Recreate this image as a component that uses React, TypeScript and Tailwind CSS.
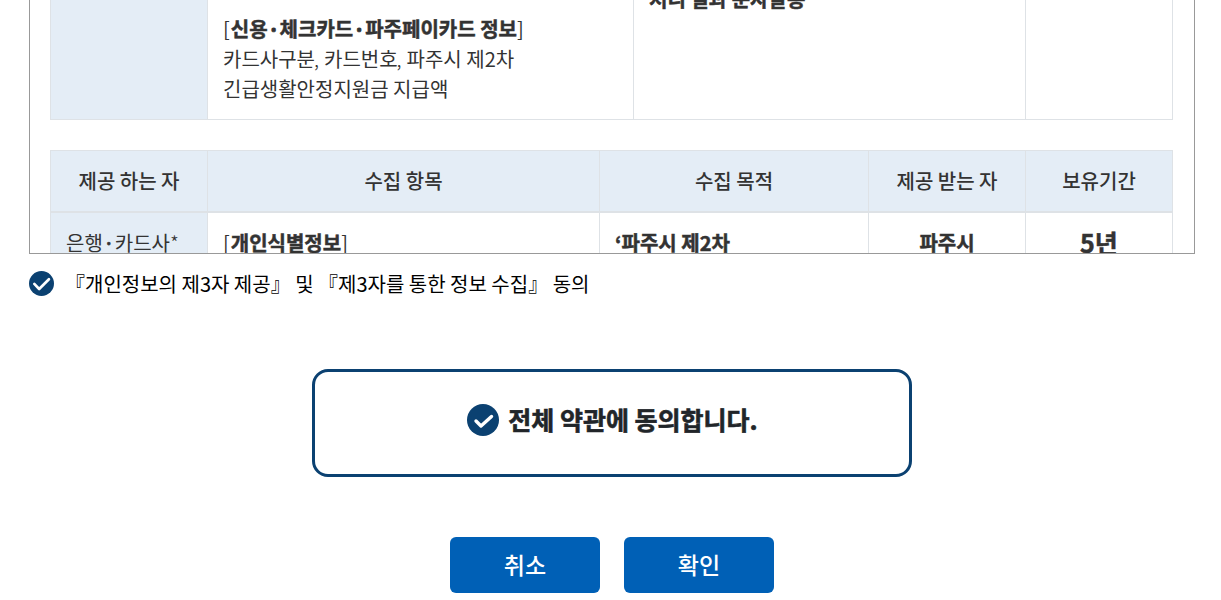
import type { ReactNode } from "react";

const CheckIcon = ({ className, path }: { className: string; path: string }) => (
  <svg className={className} viewBox="0 0 32 32" fill="none">
    <circle cx="16" cy="16" r="16" fill="#0b4171" />
    <path d={path} stroke="#fff" strokeWidth="3.4" strokeLinecap="round" strokeLinejoin="round" />
  </svg>
);

const Dot = () => <span className="inline-block w-3 text-center [-webkit-text-stroke:0.8px]">·</span>;

const Comma = () => <span className="mr-[0.5px] -ml-px font-light">,</span>;

const Bracket = ({ children }: { children: ReactNode }) => (
  <p>
    [<b className="ml-px [-webkit-text-stroke:0.5px]">{children}</b>]
  </p>
);

const headers = ["제공 하는 자", "수집 항목", "수집 목적", "제공 받는 자", "보유기간"];

const App = () => {
  return (
    <div className="h-[600px] overflow-hidden bg-white font-['Noto_Sans_CJK_KR',sans-serif] text-xl leading-[30px] text-[#333]">
      {/* TERMS BOX */}
      <div className="ml-[29px] h-[254px] w-[1166px] overflow-hidden border border-t-0 border-[#999] px-5">
        <div className="grid h-[120px] w-[1123px] grid-cols-[157px_426px_392px_147px] border-b border-l border-[#dee2e6]">
          <div className="border-r border-[#dee2e6] bg-[#e4edf6]" />
          <div className="border-r border-[#dee2e6] pt-3.5 pl-[15px]">
            <Bracket>
              신용<Dot />체크카드<Dot />파주페이카드 정보
            </Bracket>
            <p>카드사구분<Comma /> 카드번호<Comma /> 파주시 제2차</p>
            <p>긴급생활안정지원금 지급액</p>
          </div>
          <div className="border-r border-[#dee2e6] pl-[15px]">
            <p className="-mt-4 font-bold [-webkit-text-stroke:0.5px]">처리 결과 문자발송</p>
          </div>
          <div className="border-r border-[#dee2e6]" />
        </div>

        <div className="mt-[30px] w-[1123px] border-t border-l border-[#dee2e6]">
          <div className="grid h-[62px] grid-cols-[157px_392px_269px_157px_147px] border-b-2 border-[#dee2e6] bg-[#e4edf6] font-medium">
            {headers.map((header) => (
              <div key={header} className="flex items-center justify-center border-r border-[#dee2e6]">
                {header}
              </div>
            ))}
          </div>
          <div className="grid h-[120px] grid-cols-[157px_392px_269px_157px_147px]">
            <div className="border-r border-[#dee2e6] bg-[#e4edf6] pt-[15px] pl-[15px]">
              은행<Dot />카드사<span className="font-light">*</span>
            </div>
            <div className="border-r border-[#dee2e6] pt-[15px] pl-[15px]">
              <Bracket>개인식별정보</Bracket>
            </div>
            <div className="border-r border-[#dee2e6] pt-[15px] pl-[15px] font-bold [-webkit-text-stroke:0.5px]">‘파주시 제2차</div>
            <div className="border-r border-[#dee2e6] pt-[15px] text-center font-bold [-webkit-text-stroke:0.5px]">파주시</div>
            <div className="border-r border-[#dee2e6] pt-3.5 text-center text-[25px] font-bold [-webkit-text-stroke:0.5px]">5년</div>
          </div>
        </div>
      </div>

      <label className="mt-3.5 ml-[29px] flex h-[30px] items-center text-black">
        <CheckIcon className="size-[25px]" path="M6.8 16.5L13 23L25.5 10.5" />
        <span className="ml-[11px] pt-px">『개인정보의 제3자 제공』 및 『제3자를 통한 정보 수집』 동의</span>
      </label>

      {/* AGREE TO ALL */}
      <div className="mt-[71px] ml-[312px] flex h-[108px] w-[600px] items-center justify-center rounded-2xl border-3 border-[#0b4171] pb-1.5 pl-px text-[#212529]">
        <CheckIcon className="size-8" path="M9 17L14 22L24.5 12.5" />
        <span className="ml-[9px] pb-0.5 text-[25px] font-bold [-webkit-text-stroke:0.6px]">전체 약관에 동의합니다.</span>
      </div>

      {/* BUTTONS */}
      <div className="mt-[60px] ml-[450px] flex gap-6 text-[23px] font-medium text-white">
        <button className="h-14 w-[150px] rounded-md bg-[#0060b6] pb-0.5">취소</button>
        <button className="h-14 w-[150px] rounded-md bg-[#0060b6] pb-0.5">확인</button>
      </div>
    </div>
  );
};

export default App;
